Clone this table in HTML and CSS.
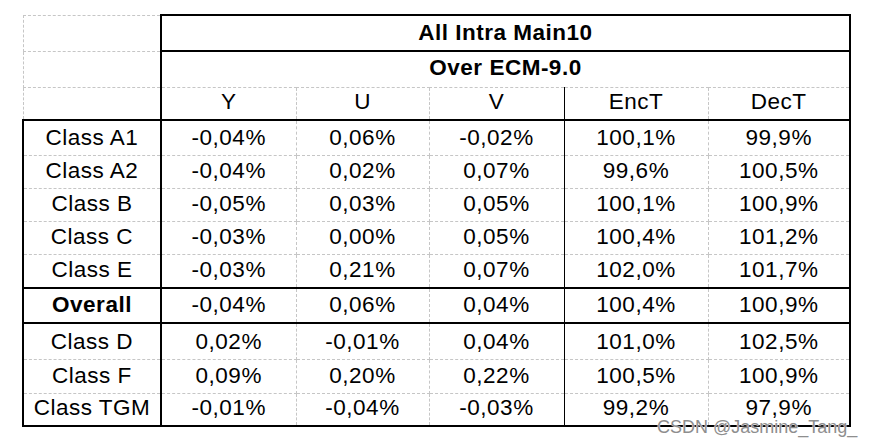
FILE: index.html
```html
<!DOCTYPE html>
<html>
<head>
<meta charset="utf-8">
<link rel="stylesheet" href="styles.css">
</head>
<body>
<div class="page">
  <table class="grid">
    <colgroup>
      <col class="w0"><col class="w1"><col class="w2"><col class="w3"><col class="w4"><col class="w5">
    </colgroup>
    <tr class="h36"><td class="blank"></td><td colspan="5" class="title bold">All Intra Main10</td></tr>
    <tr class="h36"><td class="blank"></td><td colspan="5" class="sub bold">Over ECM-9.0</td></tr>
    <tr class="h33"><td class="blank"></td><td class="lft">Y</td><td>U</td><td>V</td><td class="sep">EncT</td><td class="rgt">DecT</td></tr>

    <tr class="h35 grp"><td class="lab">Class A1</td><td class="lft">-0,04%</td><td>0,06%</td><td>-0,02%</td><td class="sep">100,1%</td><td class="rgt">99,9%</td></tr>
    <tr class="h33"><td class="lab">Class A2</td><td class="lft">-0,04%</td><td>0,02%</td><td>0,07%</td><td class="sep">99,6%</td><td class="rgt">100,5%</td></tr>
    <tr class="h33"><td class="lab">Class B</td><td class="lft">-0,05%</td><td>0,03%</td><td>0,05%</td><td class="sep">100,1%</td><td class="rgt">100,9%</td></tr>
    <tr class="h33"><td class="lab">Class C</td><td class="lft">-0,03%</td><td>0,00%</td><td>0,05%</td><td class="sep">100,4%</td><td class="rgt">101,2%</td></tr>
    <tr class="h34"><td class="lab">Class E</td><td class="lft">-0,03%</td><td>0,21%</td><td>0,07%</td><td class="sep">102,0%</td><td class="rgt">101,7%</td></tr>

    <tr class="h35 grp"><td class="lab bold">Overall</td><td class="lft">-0,04%</td><td>0,06%</td><td>0,04%</td><td class="sep">100,4%</td><td class="rgt">100,9%</td></tr>

    <tr class="h36 grp"><td class="lab">Class D</td><td class="lft">0,02%</td><td>-0,01%</td><td>0,04%</td><td class="sep">101,0%</td><td class="rgt">102,5%</td></tr>
    <tr class="h34"><td class="lab">Class F</td><td class="lft">0,09%</td><td>0,20%</td><td>0,22%</td><td class="sep">100,5%</td><td class="rgt">100,9%</td></tr>
    <tr class="h33 last"><td class="lab">Class TGM</td><td class="lft">-0,01%</td><td>-0,04%</td><td>-0,03%</td><td class="sep">99,2%</td><td class="rgt">97,9%</td></tr>
  </table>
  <div class="watermark">CSDN @Jasmine_Tang_</div>
</div>
</body>
</html>
```

FILE: styles.css
```css
html, body {
  margin: 0;
  padding: 0;
  background: #ffffff;
}

.page {
  position: relative;
  width: 872px;
  height: 447px;
  padding: 14px 0 0 22px;
  box-sizing: border-box;
}

.grid {
  border-collapse: collapse;
  table-layout: fixed;
  font-family: "Liberation Sans", Arial, sans-serif;
  font-size: 22.5px;
  letter-spacing: 0.5px;
  color: #000;
}

.w0 { width: 138px; }
.w1 { width: 135px; }
.w2 { width: 133px; }
.w3 { width: 135px; }
.w4 { width: 144px; }
.w5 { width: 142px; }

.h33 { height: 33px; }
.h34 { height: 34px; }
.h35 { height: 35px; }
.h36 { height: 36px; }

.grid td {
  border: 1px dashed #c6c6c6;
  padding: 0 0 7px 0;
  text-align: center;
  vertical-align: bottom;
  line-height: 20px;
  white-space: nowrap;
}

.bold { font-weight: bold; }

.grid td.title {
  border: 2px solid #000;
}

.grid td.sub {
  border-left: 2px solid #000;
  border-right: 2px solid #000;
  padding-bottom: 9px;
}

.grid td.lft { border-left: 2px solid #000; }
.grid td.rgt { border-right: 2px solid #000; }
.grid td.sep { border-left: 1px solid #000; }

.grid td.lab {
  border-left: 2px solid #000;
  border-right: 2px solid #000;
}

.grid tr.grp td { border-top: 2px solid #000; }
.grid tr.last td { border-bottom: 2px solid #000; }

.watermark {
  position: absolute;
  left: 657px;
  top: 420px;
  font-family: "Liberation Sans", Arial, sans-serif;
  font-size: 18px;
  line-height: 14px;
  color: #8e8e8e;
  text-shadow: 0 0 1px #fff, 0 0 1px #fff;
  white-space: nowrap;
}
```
